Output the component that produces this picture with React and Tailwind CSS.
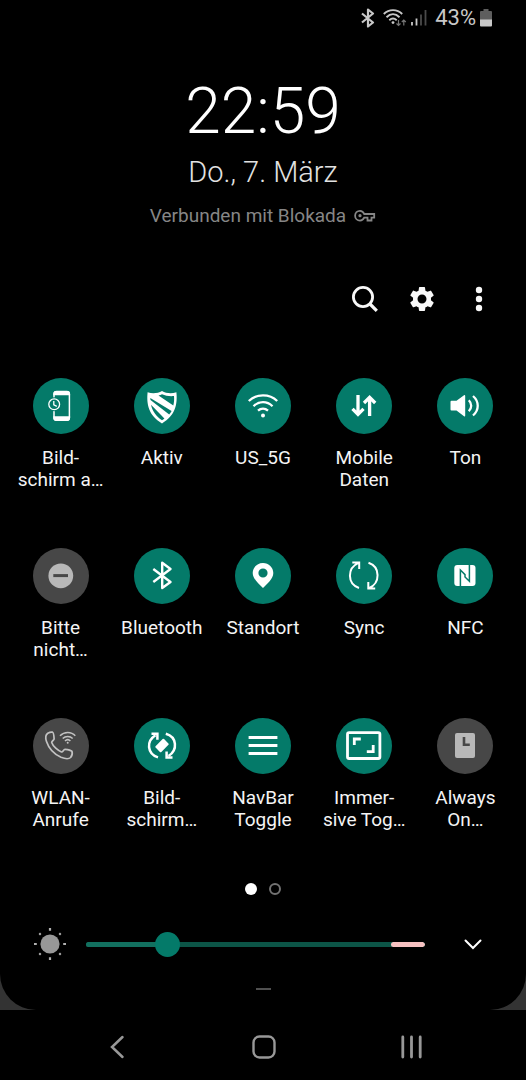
import { useState } from 'react';

const ON = '#047a69';
const OFF = '#474747';

function Icon({ children, className = '' }) {
  return (
    <svg viewBox="0 0 56 56" fill="none" aria-hidden="true" className={`size-14 ${className}`}>
      {children}
    </svg>
  );
}

function ScreenTimeoutIcon() {
  return (
    <Icon>
      <rect x="21" y="13.6" width="15.4" height="28.6" rx="2.6" stroke="white" strokeWidth="1.5" />
      <path d="M20.3 17.3V16a3 3 0 0 1 3-3h10.8a3 3 0 0 1 3 3v1.3zM20.3 38.3V40a3 3 0 0 0 3 3h10.8a3 3 0 0 0 3-3v-1.7z" fill="white" />
      <circle cx="21.2" cy="26.3" r="7" fill={ON} />
      <circle cx="21.2" cy="26.3" r="5.4" stroke="white" strokeWidth="1.3" />
      <path d="M20.8 23v3.8l3 1.6" stroke="white" strokeWidth="1.3" />
    </Icon>
  );
}

function ShieldIcon() {
  return (
    <Icon>
      <path d="M13.6 14.3C19 16 24 15.2 28 13C32 15.2 37 16 42.4 14.3C43.6 26 41.5 37.5 28 45.4C14.5 37.5 12.4 26 13.6 14.3Z" fill="white" />
      <path d="M24.5 17.6C26 17.2 27 16.8 28 16.2C31.5 17.8 36 18.5 40 18C40.3 21.5 40.1 24.5 39.3 27.5Z" fill={ON} />
      <path d="M16.3 20L37.6 33C37 34.3 36.2 35.5 35.2 36.6L16.5 22Z" fill={ON} />
      <path d="M17 26.8L30.4 40.6C29.6 41.2 28.8 41.8 28 42.2C22 38.4 18.3 33 17 26.8Z" fill={ON} />
    </Icon>
  );
}

function WifiIcon() {
  return (
    <Icon>
      <path d="M13.8 23C21.5 15.5 34.5 15.5 42.2 23M18.5 28.2C24 22.8 32 22.8 37.5 28.2M23 32.7C26 30 30 30 33 32.7" stroke="white" strokeWidth="2.3" />
      <circle cx="28" cy="37.4" r="2" fill="white" />
    </Icon>
  );
}

function DataIcon() {
  return (
    <Icon>
      <path d="M22 17V36M16.5 30.8L22 36.3L27.5 30.8M33.6 38V19.5M28 25L33.6 19.4L39.2 25" stroke="white" strokeWidth="3.3" />
    </Icon>
  );
}

function SoundIcon() {
  return (
    <Icon>
      <path d="M14.5 22.7H19.5L27 17.2Q28.2 16.5 28.2 18V37.5Q28.2 39 27 38.2L19.5 32.4H14.5Q13.5 32.4 13.5 31.4V23.7Q13.5 22.7 14.5 22.7Z" fill="white" />
      <path d="M31.8 22.3C35 25.5 35 30 31.8 33.2M36 18C42.3 23.5 42.3 32 36 37.5" stroke="white" strokeWidth="2.3" />
    </Icon>
  );
}

function DndIcon() {
  return (
    <Icon>
      <circle cx="27.8" cy="27.8" r="12.4" fill="#b8b8b8" />
      <path d="M20.3 27.6H35" stroke={OFF} strokeWidth="3" />
    </Icon>
  );
}

function BluetoothIcon() {
  return (
    <Icon>
      <path d="M19.3 21L36.5 34L28.2 40V14.8L36.5 21L19.3 34" stroke="white" strokeWidth="2.4" strokeLinejoin="round" />
    </Icon>
  );
}

function PinIcon() {
  return (
    <Icon>
      <path fillRule="evenodd" d="M28 15C22.2 15 17.7 19.5 17.7 25C17.7 31 24 36 28 40C32 36 38.3 31 38.3 25C38.3 19.5 33.8 15 28 15ZM28 20.4A4.6 4.6 0 1 1 28 29.6A4.6 4.6 0 1 1 28 20.4Z" fill="white" />
    </Icon>
  );
}

function SyncIcon() {
  return (
    <Icon>
      <path d="M23 40C11 36 11 20 22.5 14.8M16.3 14.4H23.2V21M32.5 14.8C44.5 19 44.5 35 33 40.2M39.2 40.6H32.3V34" stroke="white" strokeWidth="2" />
    </Icon>
  );
}

function NfcIcon() {
  return (
    <Icon>
      <rect x="17.3" y="17" width="21.2" height="21" rx="3" fill="white" />
      <path d="M23.4 38.5V22L28 26.6V29L32.4 33.2V16.5" stroke={ON} strokeWidth="1.5" />
    </Icon>
  );
}

function WifiCallIcon() {
  return (
    <Icon>
      <path d="M14.8 15.2C16.5 14.3 18.5 14 19.6 14.2C20.7 14.5 21 19 21.1 21C21.1 22.2 18.5 23 18.7 24.5C20 28.5 25 32.6 28.5 34C30 34.3 30.5 31.2 32 31.3C34.5 31.5 38 32.3 39 33.4C39.5 35 38.8 38 37.6 39.5C35.5 41.5 31.5 40.7 28 39.3C21.5 36.3 15.8 30.5 13.5 23.5C12.3 19.8 12.8 16.5 14.8 15.2Z" stroke="#c2c2c2" strokeWidth="1.7" />
      <path d="M27 17.7C31.3 13.3 38.3 13.3 42.3 17.7M29.7 20.5C32.5 17.7 37 17.7 39.7 20.5M32 23C33.6 21.4 35.8 21.4 37.4 23" stroke="#c2c2c2" strokeWidth="1.5" />
      <circle cx="34.7" cy="24.7" r="1" fill="#c2c2c2" />
    </Icon>
  );
}

function RotateIcon() {
  return (
    <Icon>
      <path d="M24 39.4C13 36 12 23 21.5 17.2M31.8 15.8C43 19 44 32 34.5 38" stroke="white" strokeWidth="2.5" />
      <path d="M17.5 15.8H23.4V21.8M38.5 39.4H32.6V33.4" stroke="white" strokeWidth="2.5" />
      <rect x="22" y="23.4" width="12" height="8.2" rx="1" transform="rotate(-45 28 27.5)" fill="white" />
    </Icon>
  );
}

function MenuIcon() {
  return (
    <Icon>
      <path d="M13.6 19.5H42.4M13.6 27.5H42.4M13.6 35.5H42.4" stroke="white" strokeWidth="2.8" />
    </Icon>
  );
}

function ImmersiveIcon() {
  return (
    <Icon>
      <rect x="11.5" y="14.7" width="32.4" height="25.8" rx="1.6" stroke="white" strokeWidth="2.8" />
      <path d="M18.3 27V21H24.8M37.2 27V33.7H30.8" stroke="white" strokeWidth="2.8" />
    </Icon>
  );
}

function AlwaysOnIcon() {
  return (
    <Icon>
      <rect x="18" y="15" width="20" height="25" rx="2" fill="#b8b8b8" />
      <path d="M27 19V26.8H32.8" stroke={OFF} strokeWidth="2.6" />
    </Icon>
  );
}

const TILES = [
  { lines: ['Bild-', 'schirm a…'], icon: ScreenTimeoutIcon, on: true },
  { lines: ['Aktiv'], icon: ShieldIcon, on: true },
  { lines: ['US_5G'], icon: WifiIcon, on: true },
  { lines: ['Mobile', 'Daten'], icon: DataIcon, on: true },
  { lines: ['Ton'], icon: SoundIcon, on: true },
  { lines: ['Bitte', 'nicht…'], icon: DndIcon, on: false },
  { lines: ['Bluetooth'], icon: BluetoothIcon, on: true },
  { lines: ['Standort'], icon: PinIcon, on: true },
  { lines: ['Sync'], icon: SyncIcon, on: true },
  { lines: ['NFC'], icon: NfcIcon, on: true },
  { lines: ['WLAN-', 'Anrufe'], icon: WifiCallIcon, on: false },
  { lines: ['Bild-', 'schirm…'], icon: RotateIcon, on: true },
  { lines: ['NavBar', 'Toggle'], icon: MenuIcon, on: true },
  { lines: ['Immer-', 'sive Tog…'], icon: ImmersiveIcon, on: true },
  { lines: ['Always', 'On…'], icon: AlwaysOnIcon, on: false },
];

function Tile({ lines, icon: TileIcon, on }) {
  return (
    <button type="button" aria-pressed={on} className="flex flex-col items-center gap-[13px]">
      <span className={`size-14 rounded-full ${on ? 'bg-[#047a69]' : 'bg-[#474747]'}`}>
        <TileIcon />
      </span>
      <span className="flex flex-col text-[19px] leading-[22px] whitespace-nowrap text-[#f4f4f4]">
        {lines.map((line) => (
          <span key={line}>{line}</span>
        ))}
      </span>
    </button>
  );
}

function StatusBar() {
  return (
    <div className="flex h-9 items-center justify-end pr-[34px] text-[#c8c8c8]">
      <svg viewBox="0 0 14 20" className="mr-2 h-5 w-[14px]" fill="none" aria-hidden="true">
        <path d="M1 5.5L12 14.5L7 18.5V1.5L12 5.5L1 14.5" stroke="currentColor" strokeWidth="2.2" strokeLinejoin="round" />
      </svg>
      <svg viewBox="0 0 24 20" className="mr-1 h-5 w-6" fill="none" aria-hidden="true">
        <path d="M.8 6C6 .8 14 .8 19.2 6M3.5 9.2C7.5 5.3 12.5 5.3 16.5 9.2M6.3 12.2C8.8 10 11.2 10 13.7 12.2" stroke="currentColor" strokeWidth="1.9" />
        <circle cx="10" cy="14.6" r="1.4" fill="currentColor" />
        <path d="M15.5 12V17.5M13.5 15.5L15.5 17.5L17.5 15.5M20.8 17.5V12M18.8 14L20.8 12L22.8 14" stroke="#777" strokeWidth="1.2" />
      </svg>
      <svg viewBox="0 0 16 20" className="mr-2 h-5 w-4" fill="none" aria-hidden="true">
        <path d="M1 17.5V14M5.5 17.5V10.5" stroke="currentColor" strokeWidth="1.8" />
        <path d="M10 17.5V6.5M14.5 17.5V2" stroke="#4a4a4a" strokeWidth="1.8" />
      </svg>
      <span className="mr-1 text-[22px] leading-6">43%</span>
      <svg viewBox="0 0 12 20" className="h-5 w-3" aria-hidden="true">
        <path d="M3.5 1H8.5V3H11Q12 3 12 4V12H0V4Q0 3 1 3H3.5Z" fill="#5e5e5e" />
        <path d="M0 11.5H12V17.5Q12 18.5 11 18.5H1Q0 18.5 0 17.5Z" fill="currentColor" />
      </svg>
    </div>
  );
}

function Brightness() {
  const [value, setValue] = useState(22);
  return (
    <div className="flex h-10 items-center pr-[39px] pl-8">
      <svg viewBox="0 0 36 36" className="size-9 shrink-0" fill="none" aria-hidden="true">
        <circle cx="18" cy="18" r="9.6" fill="#989898" />
        <path d="M18 2V4.8M18 31.2V34M2 18H4.8M31.2 18H34" stroke="#b0b0b0" strokeWidth="2.2" />
        <path d="M7.3 7.3L8.7 8.7M27.3 27.3L28.7 28.7M28.7 7.3L27.3 8.7M8.7 27.3L7.3 28.7" stroke="#b0b0b0" strokeWidth="2" />
      </svg>
      <div className="relative mr-[34px] ml-[18px] flex h-7 grow items-center">
        <div className="flex h-[5px] grow overflow-hidden rounded-full bg-[#0c5547]">
          <div className="bg-[#12705f]" style={{ width: `${value + 3}%` }} />
          <div className="ml-auto w-1/10 rounded-full bg-[#f6c1c1]" />
        </div>
        <input
          type="range"
          aria-label="Helligkeit"
          min="0"
          max="100"
          value={value}
          onChange={(e) => setValue(Number(e.target.value))}
          className="absolute inset-0 w-full appearance-none bg-transparent [&::-webkit-slider-thumb]:size-[25px] [&::-webkit-slider-thumb]:appearance-none [&::-webkit-slider-thumb]:rounded-full [&::-webkit-slider-thumb]:bg-[#047a69] [&::-moz-range-thumb]:size-[25px] [&::-moz-range-thumb]:border-0 [&::-moz-range-thumb]:bg-[#047a69]"
        />
      </div>
      <button type="button" aria-label="Mehr anzeigen" className="flex h-10 w-7 items-center justify-center">
        <svg viewBox="0 0 18 12" className="h-3 w-[18px]" fill="none" aria-hidden="true">
          <path d="M1.5 2.5L9 10L16.5 2.5" stroke="white" strokeWidth="2" strokeLinecap="round" />
        </svg>
      </button>
    </div>
  );
}

function NavBar() {
  return (
    <nav className="flex h-[70px] items-center justify-center bg-black pt-[3px] pl-[2px] text-[#989898]">
      <button type="button" aria-label="Zurück" className="flex h-12 w-[147px] items-center justify-center">
        <svg viewBox="0 0 24 24" className="size-6" fill="none" aria-hidden="true">
          <path d="M17.5 2L7 12L17.5 22" stroke="currentColor" strokeWidth="2.5" strokeLinecap="round" />
        </svg>
      </button>
      <button type="button" aria-label="Startseite" className="flex h-12 w-[147px] items-center justify-center">
        <svg viewBox="0 0 24 24" className="size-6" fill="none" aria-hidden="true">
          <rect x="1.5" y="1.5" width="21" height="21" rx="6" stroke="currentColor" strokeWidth="2.4" />
        </svg>
      </button>
      <button type="button" aria-label="Letzte Apps" className="flex h-12 w-[147px] items-center justify-center">
        <svg viewBox="0 0 24 24" className="size-6" fill="none" aria-hidden="true">
          <path d="M3.8 2V22M12.5 2V22M21.2 2V22" stroke="currentColor" strokeWidth="2.8" strokeLinecap="round" />
        </svg>
      </button>
    </nav>
  );
}

export default function App() {
  return (
    <div className="flex min-h-screen flex-col bg-[#333333] font-['Roboto',sans-serif]">
      <main className="flex grow flex-col rounded-b-[36px] bg-black">
        <StatusBar />
        <header className="flex flex-col items-center pt-10">
          <h1 className="text-[64px] leading-[72px] font-light text-white">22:59</h1>
          <p className="mt-1 text-[29px] leading-10 font-light text-[#e2e2e2]">Do., 7. März</p>
          <p className="mt-3 flex items-center gap-2 text-[19px] leading-6 text-[#868686]">
            Verbunden mit Blokada
            <svg viewBox="0 0 22 14" className="h-[14px] w-[22px]" fill="none" aria-hidden="true">
              <path d="M10.2 5C9.3 2.8 7.8 1.8 6 1.8A4.8 4.8 0 0 0 6 11.6C7.8 11.6 9.3 10.6 10.2 8.7H13.5V11.5H17.5V8.7H20.2V5Z" stroke="currentColor" strokeWidth="1.8" />
              <circle cx="6" cy="6.7" r="1.6" fill="currentColor" />
            </svg>
          </p>
        </header>
        <div className="mt-[47px] flex h-12 justify-end pr-[19px] text-[#f8f8f8]">
          <button type="button" aria-label="Suchen" className="flex w-[57px] items-center justify-center">
            <svg viewBox="0 0 28 28" className="size-7" fill="none" aria-hidden="true">
              <circle cx="12" cy="12" r="9.6" stroke="currentColor" strokeWidth="2.8" />
              <path d="M18.5 18.5L25.8 25.8" stroke="currentColor" strokeWidth="3.2" />
            </svg>
          </button>
          <button type="button" aria-label="Einstellungen" className="flex w-[57px] items-center justify-center">
            <svg viewBox="0 0 24 24" className="size-[30px]" fill="currentColor" aria-hidden="true">
              <path d="M19.14 12.94c.04-.3.06-.61.06-.94 0-.32-.02-.64-.07-.94l2.03-1.58a.49.49 0 0 0 .12-.61l-1.92-3.32a.488.488 0 0 0-.59-.22l-2.39.96c-.5-.38-1.03-.7-1.62-.94l-.36-2.54a.484.484 0 0 0-.48-.41h-3.84c-.24 0-.43.17-.47.41l-.36 2.54c-.59.24-1.13.57-1.62.94l-2.39-.96c-.22-.08-.47 0-.59.22L2.74 8.87c-.12.21-.08.47.12.61l2.03 1.58c-.05.3-.09.63-.09.94s.02.64.07.94l-2.03 1.58a.49.49 0 0 0-.12.61l1.92 3.32c.12.22.37.29.59.22l2.39-.96c.5.38 1.03.7 1.62.94l.36 2.54c.05.24.24.41.48.41h3.84c.24 0 .44-.17.47-.41l.36-2.54c.59-.24 1.13-.56 1.62-.94l2.39.96c.22.08.47 0 .59-.22l1.92-3.32c.12-.22.07-.47-.12-.61l-2.01-1.58zM12 15.6c-1.98 0-3.6-1.62-3.6-3.6s1.62-3.6 3.6-3.6 3.6 1.62 3.6 3.6-1.62 3.6-3.6 3.6z" />
            </svg>
          </button>
          <button type="button" aria-label="Weitere Optionen" className="flex w-[57px] items-center justify-center">
            <svg viewBox="0 0 8 26" className="h-[26px] w-2" fill="currentColor" aria-hidden="true">
              <circle cx="4" cy="4" r="3.2" />
              <circle cx="4" cy="13" r="3.2" />
              <circle cx="4" cy="22" r="3.2" />
            </svg>
          </button>
        </div>
        <section aria-label="Schnelleinstellungen" className="mt-[55px] grid grid-cols-5 items-start gap-y-[57px] px-[10px]">
          {TILES.map((tile, i) => (
            <Tile key={i} {...tile} />
          ))}
        </section>
        <div className="mt-[52px] flex items-center justify-center gap-3">
          <span className="size-3 rounded-full bg-white" />
          <span className="size-3 rounded-full border-2 border-[#727272]" />
        </div>
        <div className="mt-[29px]">
          <Brightness />
        </div>
        <div className="mt-6 flex justify-center pb-5">
          <span className="h-[2px] w-[15px] bg-[#505050]" />
        </div>
      </main>
      <NavBar />
    </div>
  );
}
